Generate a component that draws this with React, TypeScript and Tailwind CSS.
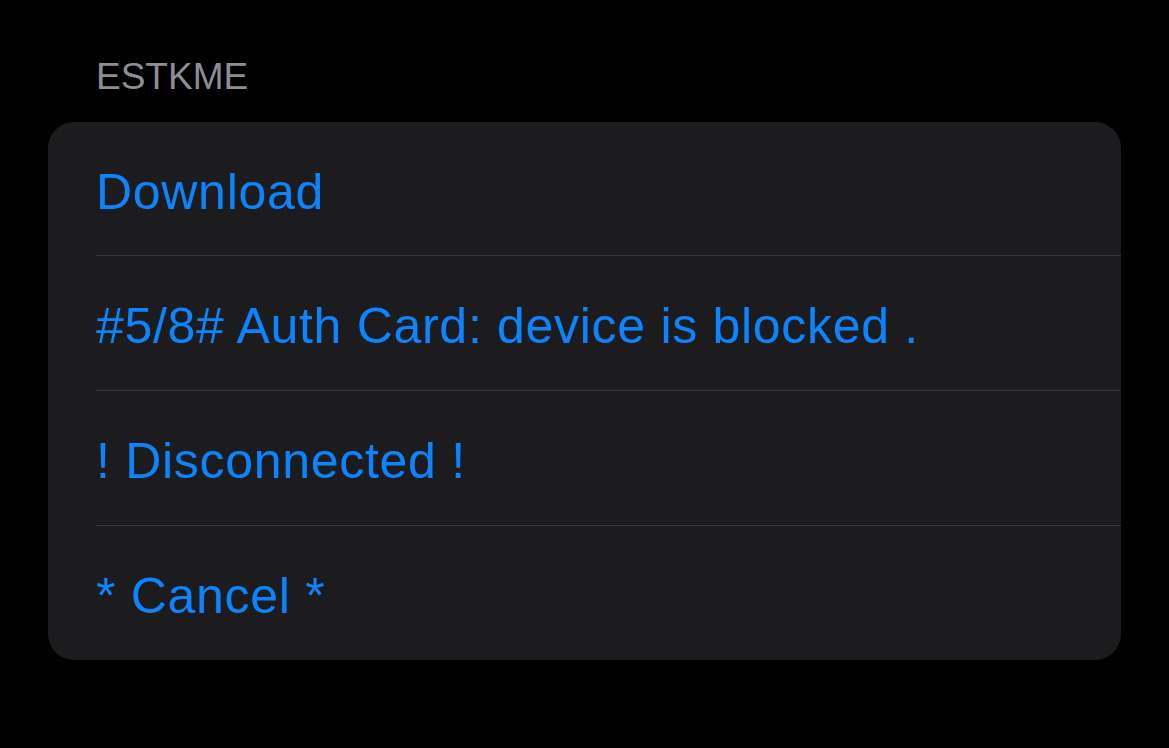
export default function App() {
  const rows = [
    'Download',
    '#5/8# Auth Card: device is blocked .',
    '! Disconnected !',
    '* Cancel *',
  ];

  return (
    <div
      className="min-h-[748px] w-full bg-black pt-[58px] px-[48px]"
      style={{ fontFamily: '"Liberation Sans", Arial, sans-serif' }}
    >
      <div className="pl-[48px] text-[37px] leading-[37px] text-[#8d8d93] mb-[27px]">ESTKME</div>

      <div className="w-[1073px] rounded-[26px] bg-[#1c1c1e] overflow-hidden">
        {rows.map((label, i) => (
          <div
            key={label}
            className={`ml-[48px] pt-[6px] flex items-center text-[50px] leading-none tracking-[0.7px] text-[#0a84ff] ${
              i === 0 ? 'h-[133px]' : 'h-[135px] border-t border-[#38383a]'
            }`}
          >
            {label}
          </div>
        ))}
      </div>
    </div>
  );
}
